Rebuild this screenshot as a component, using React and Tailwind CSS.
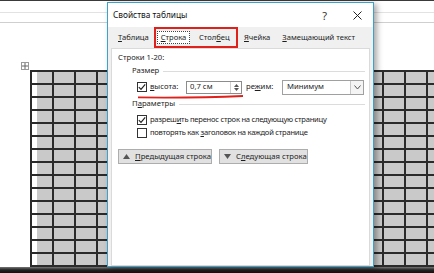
import React from "react";

const CheckBox = ({ checked }) => (
  <div className="w-[10px] h-[10px] border border-[#333] bg-white flex items-center justify-center shrink-0">
    {checked && (
      <svg width="8" height="8" viewBox="0 0 8 8">
        <path d="M0.8 4.2 L3 6.4 L7.2 1.4" fill="none" stroke="#222" strokeWidth="1.2" />
      </svg>
    )}
  </div>
);

const U = ({ children }) => <span className="underline underline-offset-[1px]">{children}</span>;

const GroupHeader = ({ children }) => (
  <div className="flex items-center gap-[4px] pl-[20px] pr-[4px] h-[12px]">
    <span>{children}</span>
    <div className="flex-1 h-[1px] bg-[#dcdcdc]" />
  </div>
);

const TableGrid = () => {
  const rows = Array.from({ length: 15 });
  const cols = Array.from({ length: 19 });
  return (
    <div className="grid grid-cols-[repeat(19,22px)] auto-rows-[13px] border-l-2 border-t-2 border-[#2a2a2a] w-max">
      {rows.map((_, r) =>
        cols.map((_, c) => (
          <div key={r + "-" + c} className="border-r-2 border-b-2 border-[#2a2a2a] bg-[#c9c9c9] flex">
            {c === 0 && <div className="w-[5px] h-full bg-white" />}
          </div>
        ))
      )}
    </div>
  );
};

export default function App() {
  return (
    <div className="relative w-[434px] h-[273px] overflow-hidden bg-white flex flex-col font-['Noto_Sans',sans-serif] text-[7.7px] text-[#1e1e1e] leading-none">
      <div className="h-[1px] bg-[#3a3a3a]" />
      <div className="flex-1 flex min-h-0 overflow-hidden">
        <div className="w-[5px] bg-gradient-to-r from-[#2a2a2a] via-[#707070] to-[#d0d0d0]" />
        <div className="flex-1 flex flex-col">
          <div className="h-[13px] border-b border-[#e2e2e2]" />
          <div className="h-[12px] border-b border-[#cfcfcf]" />
          <div className="h-[44px]" />
          <div className="ml-[21px] w-[8px] h-[8px] border border-[#999] flex items-center justify-center">
            <svg width="6" height="6" viewBox="0 0 6 6">
              <path d="M3 0 V6 M0 3 H6" stroke="#666" strokeWidth="1" />
            </svg>
          </div>
          <div className="ml-[30px]">
            <TableGrid />
          </div>
        </div>
      </div>
      <div className="h-[6px] bg-gradient-to-b from-[#777] via-[#222] to-[#111]" />

      {/* dialog */}
      <div className="absolute left-[107px] top-[2px] w-[267px] h-[265px] border border-[#3ea2c8] bg-[#f0f0f0] flex flex-col shadow-[3px_2px_6px_rgba(0,0,0,0.35)]">
        <div className="h-[24px] bg-white flex items-center pl-[5px] pr-[11px] shrink-0">
          <span className="text-[8.3px] text-[#111]">Свойства таблицы</span>
          <span className="ml-auto text-[11px] text-[#333] mr-[26px]">?</span>
          <svg width="9" height="9" viewBox="0 0 9 9">
            <path d="M0.5 0.5 L8.5 8.5 M8.5 0.5 L0.5 8.5" stroke="#222" strokeWidth="1" />
          </svg>
        </div>
        <div className="flex items-center h-[21px] pl-[4px] shrink-0 text-[7.6px]">
          <div className="w-[42px] pl-[6px]"><U>Т</U>аблица</div>
          <div className="w-[84px] h-[21px] border-2 border-[#e0201b] flex items-center">
            <div className="ml-[1px] w-[33px] h-[13px] border border-dotted border-[#444] bg-white flex items-center justify-center">
              <U>С</U>трока
            </div>
            <div className="ml-[9px]">Стол<U>б</U>ец</div>
          </div>
          <div className="ml-[6px]"><U>Я</U>чейка</div>
          <div className="ml-[12px]"><U>З</U>амещающий текст</div>
        </div>
        <div className="flex-1 mx-[3px] bg-white border border-[#dadada] flex flex-col">
          <div className="pl-[6px] pt-[5px] h-[16px]">Строки 1-20:</div>
          <GroupHeader>Размер</GroupHeader>
          <div className="flex items-center h-[16px] mt-[2px] pl-[25px]">
            <CheckBox checked />
            <span className="ml-[3px] w-[36px]"><U>в</U>ысота:</span>
            <div className="w-[56px] h-[13px] border border-[#8c8c8c] flex items-center">
              <span className="pl-[3px] flex-1">0,7 см</span>
              <div className="w-[11px] h-full border-l border-[#d0d0d0] flex flex-col items-center justify-center gap-[1px]">
                <svg width="5" height="3" viewBox="0 0 5 3"><path d="M0 3 L2.5 0 L5 3Z" fill="#555" /></svg>
                <svg width="5" height="3" viewBox="0 0 5 3"><path d="M0 0 L2.5 3 L5 0Z" fill="#555" /></svg>
              </div>
            </div>
            <span className="ml-[4px] w-[36px]">ре<U>ж</U>им:</span>
            <div className="w-[82px] h-[15px] border border-[#a0a0a0] flex items-center">
              <span className="pl-[4px] flex-1">Минимум</span>
              <div className="w-[13px] h-full border-l border-[#c8c8c8] bg-[#f4f4f4] flex items-center justify-center">
                <svg width="7" height="5" viewBox="0 0 7 5"><path d="M0.5 0.5 L3.5 4 L6.5 0.5" fill="none" stroke="#555" strokeWidth="1" /></svg>
              </div>
            </div>
          </div>
          <div className="pl-[25px] h-[3px] overflow-visible">
            <svg width="107" height="4" viewBox="0 0 107 4">
              <path d="M1 2.4 Q60 3 106 1" fill="none" stroke="#e0201b" strokeWidth="1.8" />
            </svg>
          </div>
          <GroupHeader>П<U>а</U>раметры</GroupHeader>
          <div className="flex items-center h-[13px] mt-[3px] pl-[25px]">
            <CheckBox checked />
            <span className="ml-[3px] whitespace-nowrap text-[7.6px] tracking-[-0.25px]">разреш<U>и</U>ть перенос строк на следующую страницу</span>
          </div>
          <div className="flex items-center h-[13px] pl-[25px]">
            <CheckBox />
            <span className="ml-[3px] whitespace-nowrap text-[7.6px] tracking-[-0.25px]">повторять как <U>з</U>аголовок на каждой странице</span>
          </div>
          <div className="flex items-center gap-[7px] pl-[6px] mt-[10px]">
            <div className="w-[94px] h-[15px] bg-[#e1e1e1] border border-[#adadad] flex items-center pl-[4px] gap-[5px] whitespace-nowrap">
              <svg width="7" height="5" viewBox="0 0 7 5" className="shrink-0"><path d="M0 5 L3.5 0 L7 5Z" fill="#555" /></svg>
              <span><U>П</U>редыдущая строка</span>
            </div>
            <div className="w-[89px] h-[15px] bg-[#e1e1e1] border border-[#adadad] flex items-center pl-[4px] gap-[5px] whitespace-nowrap">
              <svg width="7" height="5" viewBox="0 0 7 5" className="shrink-0"><path d="M0 0 L3.5 5 L7 0Z" fill="#555" /></svg>
              <span>С<U>л</U>едующая строка</span>
            </div>
          </div>
        </div>
      </div>
    </div>
  );
}
